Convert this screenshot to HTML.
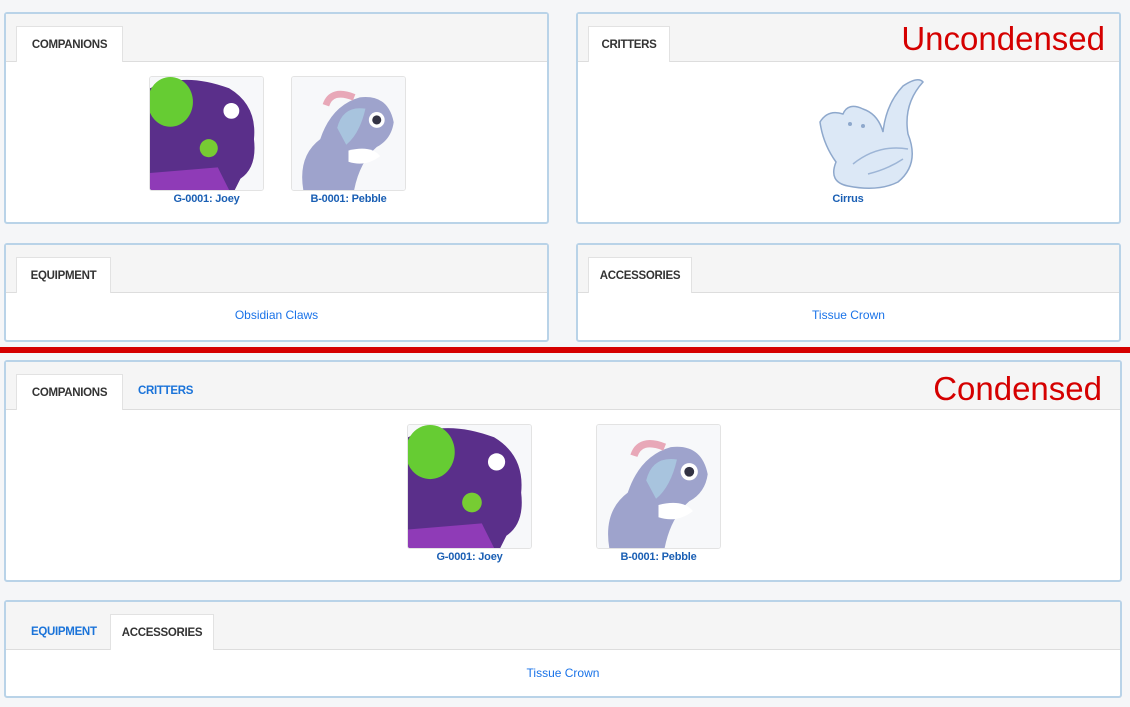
<!DOCTYPE html>
<html><head><meta charset="utf-8"><style>
body{margin:0;width:1130px;height:707px;background:#f5f6f8;position:relative;overflow:hidden;font-family:"Liberation Sans",sans-serif}
.p{position:absolute;background:#fff;border:2px solid #b9d3e8;border-radius:3px;box-sizing:border-box}
.h{position:absolute;left:0;right:0;top:0;background:#f5f5f5;border-bottom:1px solid #ddd}
.t{position:absolute;background:#fff;border:1px solid #e2e2e2;border-bottom:none;font-weight:bold;font-size:11.5px;letter-spacing:-0.3px;color:#333;display:flex;align-items:center;justify-content:center;box-sizing:border-box}
.tb{position:absolute;font-weight:bold;font-size:11.5px;letter-spacing:-0.3px;color:#1a73d9}
.lk{position:absolute;font-size:12px;color:#1a73e8;text-align:center}
.nm{position:absolute;font-size:11px;font-weight:bold;letter-spacing:-0.2px;color:#1a5fb4;text-align:center}
.im{position:absolute;border:1px solid #e3e3e3;border-radius:3px;background:#f7f8fa;overflow:hidden;box-sizing:border-box}
.red{position:absolute;color:#d50000;font-size:33px}
</style></head><body>
<svg width="0" height="0" style="position:absolute"><defs>
<g id="joey"><rect width="100" height="100" fill="#f7f8fa"/><path d="M0 10 Q30 -5 70 10 Q95 25 92 55 Q95 80 80 90 L75 100 L0 100Z" fill="#5a2f8a"/><ellipse cx="18" cy="22" rx="20" ry="22" fill="#66cc33"/><circle cx="72" cy="30" r="7" fill="#fff"/><circle cx="52" cy="63" r="8" fill="#77cc33"/><path d="M0 85 L60 80 L70 100 L0 100Z" fill="#9c3fc2" opacity=".8"/></g>
<g id="peb"><rect width="100" height="100" fill="#f7f8fa"/><path d="M10 100 Q5 70 25 55 Q35 25 60 18 Q85 15 90 40 Q88 55 75 62 Q60 75 55 100Z" fill="#9ea3cc"/><path d="M40 45 Q45 25 65 28 Q60 50 48 60Z" fill="#a8c4de"/><path d="M30 25 Q35 10 55 18" stroke="#e8a8b8" stroke-width="6" fill="none"/><circle cx="75" cy="38" r="7" fill="#fff"/><circle cx="75" cy="38" r="4" fill="#334"/><path d="M50 65 Q70 60 78 70 Q65 80 50 75Z" fill="#fff"/></g>
</defs></svg>

<div class="p" style="left:4px;top:12px;width:545px;height:212px"><div class="h" style="height:47px"></div>
<div class="t" style="left:10px;top:12px;width:107px;height:36px">COMPANIONS</div>
<div class="im" style="left:143px;top:62px;width:115px;height:115px"><svg viewBox="0 0 100 100" width="113" height="113"><use href="#joey"/></svg></div>
<div class="im" style="left:285px;top:62px;width:115px;height:115px"><svg viewBox="0 0 100 100" width="113" height="113"><use href="#peb"/></svg></div>
<div class="nm" style="left:143px;top:179px;width:115px">G-0001: Joey</div>
<div class="nm" style="left:285px;top:179px;width:115px">B-0001: Pebble</div>
</div>

<div class="p" style="left:576px;top:12px;width:545px;height:212px"><div class="h" style="height:47px"></div>
<div class="t" style="left:10px;top:12px;width:82px;height:36px">CRITTERS</div>
<div class="red" style="right:14px;top:6px">Uncondensed</div>
<svg style="position:absolute;left:230px;top:60px" width="120" height="120" viewBox="0 0 120 120"><path d="M40 112 Q20 108 28 88 Q15 70 12 48 Q20 35 35 40 Q40 28 55 35 Q70 40 75 58 Q78 30 95 12 Q110 2 115 8 Q95 30 100 60 Q112 90 90 108 Q70 118 40 112Z" fill="#dce8f6" stroke="#8ea8cc" stroke-width="1.5"/><path d="M45 90 Q70 70 100 75 M60 100 Q80 95 95 85" stroke="#9db5d6" fill="none" stroke-width="1.5"/><circle cx="42" cy="50" r="2" fill="#8ea8cc"/><circle cx="55" cy="52" r="2" fill="#8ea8cc"/></svg>
<div class="nm" style="left:235px;top:179px;width:70px">Cirrus</div>
</div>

<div class="p" style="left:4px;top:243px;width:545px;height:99px"><div class="h" style="height:47px"></div>
<div class="t" style="left:10px;top:12px;width:95px;height:36px">EQUIPMENT</div>
<div class="lk" style="left:0;right:0;top:63px">Obsidian Claws</div></div>

<div class="p" style="left:576px;top:243px;width:545px;height:99px"><div class="h" style="height:47px"></div>
<div class="t" style="left:10px;top:12px;width:104px;height:36px">ACCESSORIES</div>
<div class="lk" style="left:0;right:0;top:63px">Tissue Crown</div></div>

<div style="position:absolute;left:0;top:347px;width:1130px;height:6px;background:#d50000"></div>

<div class="p" style="left:4px;top:360px;width:1118px;height:222px"><div class="h" style="height:47px"></div>
<div class="t" style="left:10px;top:12px;width:107px;height:36px">COMPANIONS</div>
<div class="tb" style="left:132px;top:23px">CRITTERS</div>
<div class="red" style="right:18px;top:8px">Condensed</div>
<div class="im" style="left:401px;top:62px;width:125px;height:125px"><svg viewBox="0 0 100 100" width="123" height="123"><use href="#joey"/></svg></div>
<div class="im" style="left:590px;top:62px;width:125px;height:125px"><svg viewBox="0 0 100 100" width="123" height="123"><use href="#peb"/></svg></div>
<div class="nm" style="left:401px;top:189px;width:125px">G-0001: Joey</div>
<div class="nm" style="left:590px;top:189px;width:125px">B-0001: Pebble</div>
</div>

<div class="p" style="left:4px;top:600px;width:1118px;height:98px"><div class="h" style="height:47px"></div>
<div class="tb" style="left:25px;top:24px">EQUIPMENT</div>
<div class="t" style="left:104px;top:12px;width:104px;height:36px">ACCESSORIES</div>
<div class="lk" style="left:0;right:0;top:64px">Tissue Crown</div></div>
</body></html>
